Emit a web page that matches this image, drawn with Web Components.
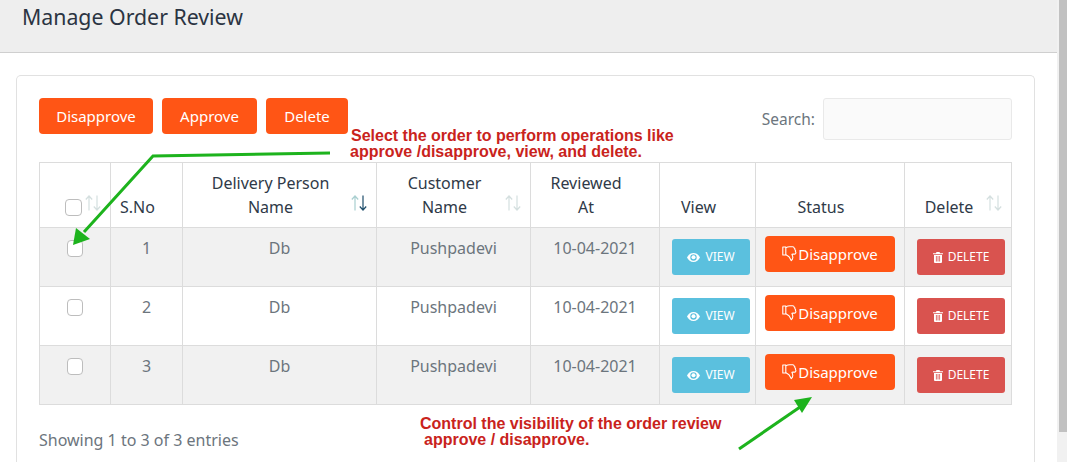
<!DOCTYPE html>
<html lang="en"><head><meta charset="utf-8"><title>Manage Order Review</title>
<style>
html,body{margin:0;padding:0;height:462px;overflow:hidden;background:#fff}
body{font-family:"Noto Sans","Open Sans",sans-serif;}
</style></head>
<body>
<app-shell>
  <page-header>Manage Order Review</page-header>
  <review-card>
    <card-toolbar>
      <app-btn style="width:114px">Disapprove</app-btn><app-btn style="width:95px">Approve</app-btn><app-btn style="width:82px">Delete</app-btn>
    </card-toolbar>
    <review-table></review-table>
    <table-info>Showing 1 to 3 of 3 entries</table-info>
  </review-card>
</app-shell>
<page-annotations></page-annotations>
<script>
function def(name,css,html){
  customElements.define(name,class extends HTMLElement{
    constructor(){super();const r=this.attachShadow({mode:'open'});r.innerHTML=`<style>${css}</style>${html}`;}
  });
}
const ICON={
 eye:'<svg width="13" height="9" viewBox="0 0 13 9"><path fill="#fff" fill-rule="evenodd" d="M6.5 0C3.6 0 1.3 1.8 0 4.5 1.3 7.2 3.6 9 6.5 9s5.2-1.8 6.5-4.5C11.700 1.800 9.400 0 6.500 0zM6.500 1.300a3.200 3.200 0 1 1 0 6.400 3.200 3.200 0 0 1 0-6.400z"/><circle cx="6.500" cy="4.300" r="2" fill="#fff"/></svg>',
 trash:'<svg width="10" height="11" viewBox="0 0 10 11"><path fill="#fff" d="M3.500 0h3l.6 1.300H10v1H0v-1h2.900zM1 3h8v7a1 1 0 0 1-1 1H2a1 1 0 0 1-1-1z"/><path stroke="#d9534f" stroke-width=".8" d="M3.400 4v5.500M5 4v5.500M6.600 4v5.500"/></svg>',
 thumb:'<svg width="16" height="16" viewBox="0 0 16 16" fill="none" stroke="#fff" stroke-width="1.100" stroke-linejoin="round"><path d="M.8 1h3v8h-3z"/><path d="M3.800 1.800C5 1.200 6 .8 7.500.8h3.200c.9 0 1.400.5 1.400 1.200.8.300 1 1.100.7 1.700.8.400 1 1.200.6 1.900.7.500.7 1.900-.2 2.300-.9.300-2.600.2-3.300.3.500 1.300 1 2.400.9 3.600-.1 1.100-.6 2.300-1.500 2.800L7 10.800 3.800 8.600"/></svg>',
 sort:(up,down)=>`<svg width="16" height="16" viewBox="0 0 16 16" fill="none" stroke-width="1.200"><path stroke="${up}" d="M4 15.500V1M.8 4.500 4 1l3.200 3.500"/><path stroke="${down}" d="M12 .5V15M8.800 11.500 12 15l3.200-3.500"/></svg>`
};

def('app-shell',`:host{display:grid;grid-template-columns:1057px 10px;height:462px;overflow:hidden;position:relative}
  .main{display:flex;flex-direction:column;min-width:0}
  .track{background:#f1f1f1;display:flex;justify-content:flex-end;height:462px}
  .thumb{width:8px;height:432px;background:#c1c1c1}`,
  `<div class="main"><slot></slot></div><div class="track"><div class="thumb"></div></div>`);

def('page-header',`:host{display:block;height:52px;background:#eee;border-bottom:1px solid #cfcfcf;padding-left:22px;
   font-size:21.300px;line-height:34px;color:#2b3442;white-space:nowrap}`,`<slot></slot>`);

def('review-card',`:host{display:block;margin:22px 22px 0 16px;border:1px solid #e1e1e1;border-bottom:0;border-radius:5px 5px 0 0;padding:22px 22px 0 22px;height:420px;box-sizing:border-box;background:#fff}`,`<slot></slot>`);

def('card-toolbar',`:host{display:flex;align-items:flex-start;height:64px}
  .btns{display:flex;gap:9px}
  .search{margin-left:auto;display:flex;align-items:center;gap:8px;font-size:15.500px;color:#6c757d;height:42px}
  .input{width:187px;height:40px;background:#fafafa;border:1px solid #e9e9e9;border-radius:3px}`,
  `<div class="btns"><slot></slot></div><label class="search">Search:<span class="input" role="textbox"></span></label>`);

def('app-btn',`:host{display:inline-flex;align-items:center;justify-content:center;height:36px;background:#ff5515;color:#fff;border-radius:4px;font-size:15px;box-sizing:border-box;white-space:nowrap}`,`<slot></slot>`);

def('check-box',`:host{display:inline-block;width:14.500px;height:14.500px;border:1px solid #bdbdbd;border-radius:4px;background:#fff}`,``);

def('sort-arrows',`:host{position:absolute;right:9px;bottom:16px;width:16px;height:16px;display:block;line-height:0}`,`<slot></slot>`);

def('mini-btn',`:host{display:inline-flex;align-items:center;justify-content:center;gap:5px;height:36px;border-radius:3px;color:#fff;font-size:12px;box-sizing:border-box;background:var(--bg);width:var(--w);line-height:16px}`,`<slot></slot>`);

const rows=[1,2,3].map(n=>`<tr>
  <td><check-box></check-box></td><td>${n}</td><td>Db</td><td>Pushpadevi</td><td>10-04-2021</td>
  <td class="a v"><mini-btn style="--bg:#5bc0de;--w:78px">${ICON.eye}<span>VIEW</span></mini-btn></td>
  <td class="a s"><app-btn class="st">${ICON.thumb}<span>Disapprove</span></app-btn></td>
  <td class="a d"><mini-btn style="--bg:#d9534f;--w:88px">${ICON.trash}<span>DELETE</span></mini-btn></td>
</tr>`).join('');
const sort=(u,d)=>`<sort-arrows>${ICON.sort(u,d)}</sort-arrows>`;
const L='#d4dfdf';
def('review-table',`:host{display:block;width:972px}
  table{border-collapse:collapse;table-layout:fixed;width:972px;font-size:16px;line-height:24px}
  th,td{border:1px solid #dcdcdc;padding:0;box-sizing:border-box}
  th{position:relative;height:65px;vertical-align:bottom;font-weight:400;color:#2f3a48;padding:8px 26px 8px 8px;text-align:center}
  td{height:59px;vertical-align:top;text-align:center;color:#6c757d;padding-top:8px}
  tbody tr:nth-child(odd) td{background:#f1f1f1}
  td.a{padding-top:11px;line-height:0}
  td.s{padding-top:8px;text-align:left;padding-left:9px}
  td.v,td.d{text-align:left;padding-left:12px}
  .st{width:130px;font-size:15px;vertical-align:top;line-height:20px}
  .ck{position:relative;vertical-align:top;margin:0 -5px 0 0;left:5px;top:4px}
  td check-box{vertical-align:top;margin-top:4px}
  td:first-child{text-align:center}`,
  `<table><colgroup><col style="width:71px"><col style="width:72px"><col style="width:194px"><col style="width:154px"><col style="width:129px"><col style="width:96px"><col style="width:149px"><col style="width:107px"></colgroup>
  <thead><tr>
   <th><check-box class="ck"></check-box>${sort(L,L)}</th>
   <th>S.No</th>
   <th>Delivery Person<br>Name${sort('#a9cfd0','#1f4e6b')}</th>
   <th>Customer<br>Name${sort(L,L)}</th>
   <th>Reviewed<br>At</th>
   <th>View</th><th>Status</th>
   <th>Delete${sort(L,L)}</th>
  </tr></thead><tbody>${rows}</tbody></table>`);

def('table-info',`:host{display:block;margin-top:23px;font-size:16px;line-height:24px;color:#6c757d}`,`<slot></slot>`);

def('page-annotations',`:host{position:absolute;left:0;top:0;width:1067px;height:462px;pointer-events:none;display:block}
  svg{position:absolute;left:0;top:0}
  .note{position:absolute;font:700 16px/16px "Liberation Sans",Arial,sans-serif;color:#c9231c;white-space:pre}`,
  `<svg width="1067" height="462" viewBox="0 0 1067 462">
    <g fill="none" stroke="#1db31d" stroke-width="3"><path d="M330 153 153 156 84 232"/><path d="M739 449 803 405"/></g>
    <path fill="#1db31d" d="M73 245 76 228 90 239z"/><path fill="#1db31d" d="M812 397 794 400 802 413z"/>
  </svg>
  <div class="note" style="left:351px;top:128px">Select the order to perform operations like</div>
  <div class="note" style="left:350px;top:144px">approve /disapprove, view, and delete.</div>
  <div class="note" style="left:420px;top:416px">Control the visibility of the order review</div>
  <div class="note" style="left:424px;top:432px">approve / disapprove.</div>`);
</script>
</body></html>
